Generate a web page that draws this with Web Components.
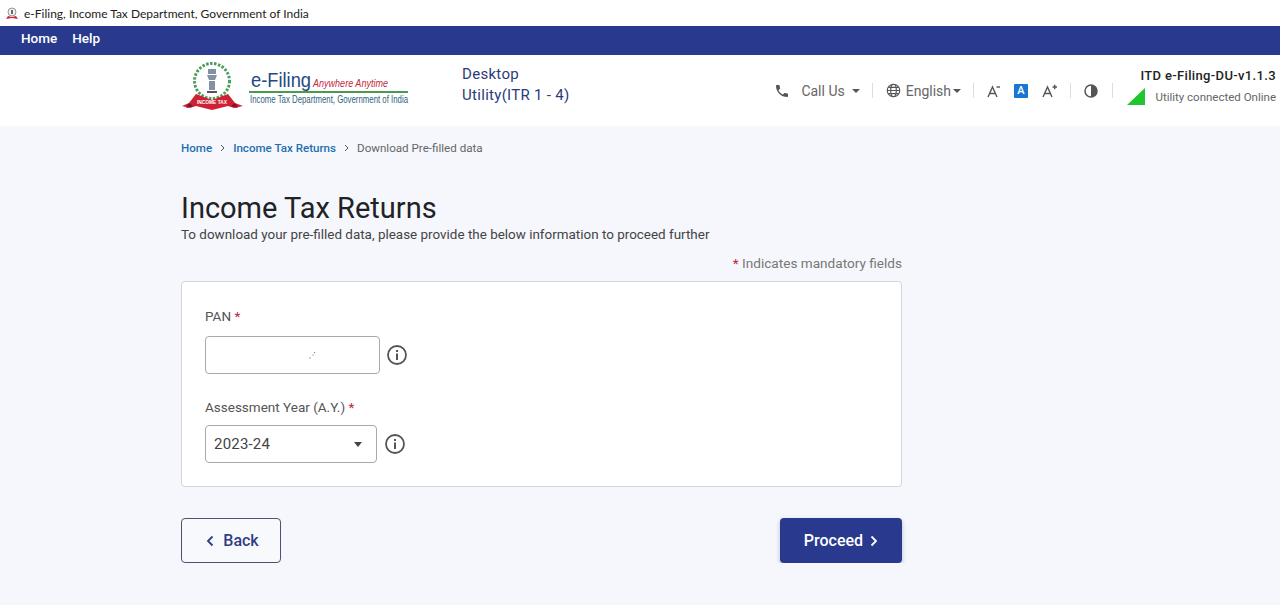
<!DOCTYPE html>
<html lang="en">
<head>
<meta charset="utf-8">
<title>e-Filing, Income Tax Department, Government of India</title>
<style>
html, body { margin: 0; padding: 0; background: #f5f7fc; font-family: Roboto, "Liberation Sans", sans-serif; }
</style>
</head>
<body>
<window-title>e-Filing, Income Tax Department, Government of India</window-title>
<top-nav></top-nav>
<site-header></site-header>
<page-main></page-main>

<script>
class windowTitle extends HTMLElement {
    constructor() {
        super();
        this.attachShadow({ mode: "open" });
        this.shadowRoot.innerHTML = `
        <style>
            :host { display: flex; align-items: center; height: 26px; background: #fff; padding-left: 5px; box-sizing: border-box; font: 12px Lato, "Open Sans", sans-serif; color: #222; }
            svg { margin-right: 5px; }
        </style>
        <svg width="14" height="13" viewBox="0 0 14 13">
            <circle cx="7" cy="5" r="4" fill="#f4f1ee" stroke="#8a9a8a"/>
            <rect x="6" y="3" width="2" height="4" fill="#667"/>
            <path d="M1 12 L3 9 L7 10 L11 9 L13 12 L7 11 Z" fill="#c8283c"/>
        </svg>
        <span><slot></slot></span>
        `;
    }
}
customElements.define("window-title", windowTitle);

class topNav extends HTMLElement {
    constructor() {
        super();
        this.attachShadow({ mode: "open" });
        this.shadowRoot.innerHTML = `
        <style>
            :host { display: flex; align-items: center; gap: 15px; height: 29px; padding: 0 0 5px 21px; box-sizing: border-box; background: #293a8e; color: #fff; font: 500 13.5px Roboto, sans-serif; }
        </style>
        <span>Home</span><span>Help</span>
        `;
    }
}
customElements.define("top-nav", topNav);

class efilingLogo extends HTMLElement {
    constructor() {
        super();
        this.attachShadow({ mode: "open" });
        this.shadowRoot.innerHTML = `
        <style>
            :host { display: block; width: 228px; height: 56px; }
            svg { display: block; }
        </style>
        <svg width="228" height="56" viewBox="0 0 228 56">
            <circle cx="31" cy="19" r="17.500" fill="none" stroke="#4a9f5c" stroke-width="3" stroke-dasharray="2.500 1.500"/>
            <path d="M27 7 h8 v5 h-8z M26 13 h10 l-2 5 h-6z M28 19 h6 v9 h-6z" fill="#8491a5"/>
            <rect x="26" y="29" width="10" height="2" fill="#555"/>
            <path d="M1 44 L8 41 L15 32 L31 38 L47 32 L54 41 L62 44 L53 46 L47 44 L31 48 L15 44 L9 46 Z" fill="#cf2133"/>
            <path d="M8 41 L5 46 L12 44 Z M54 41 L57 46 L50 44 Z" fill="#7a1525"/>
            <text x="16" y="42" font-family="Liberation Sans" font-size="4.500" font-weight="700" fill="#fff" textLength="30" lengthAdjust="spacingAndGlyphs">INCOME TAX</text>
            <text x="70" y="25" font-family="Liberation Sans" font-size="20" fill="#1f4a7d" textLength="60" lengthAdjust="spacingAndGlyphs">e-Filing</text>
            <text x="132" y="25" font-family="Liberation Sans" font-size="11" font-style="italic" fill="#c22a3e" textLength="75" lengthAdjust="spacingAndGlyphs">Anywhere Anytime</text>
            <rect x="68" y="29" width="159" height="2" fill="#4b9a52"/>
            <text x="69" y="41" font-family="Liberation Sans" font-size="10.500" fill="#2f5f80" textLength="158" lengthAdjust="spacingAndGlyphs">Income Tax Department, Government of India</text>
        </svg>
        `;
    }
}
customElements.define("efiling-logo", efilingLogo);

class siteHeader extends HTMLElement {
    constructor() {
        super();
        this.attachShadow({ mode: "open" });
        this.shadowRoot.innerHTML = `
        <style>
            :host { display: flex; align-items: center; height: 71px; padding-left: 181px; box-sizing: border-box; background: #fff; font-family: Roboto, sans-serif; white-space: nowrap; }
            efiling-logo { margin-top: -1px; }
            .app { margin-left: 53px; width: 120px; font-size: 15px; line-height: 21px; color: #2b3b78; letter-spacing: 0.3px; margin-top: -11px; white-space: normal; }
            .tools { display: flex; align-items: center; margin-left: 196px; height: 20px; color: #666; font-size: 14px; }
            .sep { width: 1px; height: 15px; background: #dedede; }
            .caret { width: 0; height: 0; border: 4px solid transparent; border-top: 4px solid #555; border-bottom: 0; display: inline-block; }
            .tools svg { display: block; flex: none; }
            .status { margin-left: 16px; width: 151px; align-self: stretch; display: flex; flex-direction: column; justify-content: center; align-items: flex-end; padding: 0 4px 6px 0; box-sizing: border-box; margin-top: -2px; }
            .status b { font-weight: 500; font-size: 13px; color: #222; letter-spacing: 0.35px; line-height: 16px; }
            .row { display: flex; align-items: center; gap: 10px; color: #666; font-size: 11.500px; line-height: 16px; margin-top: 4px; }
        </style>
        <efiling-logo></efiling-logo>
        <div class="app">Desktop Utility(ITR 1 - 4)</div>
        <div class="tools">
            <svg width="16" height="16" viewBox="0 0 24 24"><path fill="#555" d="M6.6 10.8c1.4 2.8 3.8 5.1 6.6 6.6l2.2-2.2c.3-.3.7-.4 1-.2 1.1.4 2.3.6 3.6.6.6 0 1 .4 1 1V20c0 .6-.4 1-1 1C10.6 21 3 13.4 3 4c0-.6.4-1 1-1h3.500c.6 0 1 .4 1 1 0 1.300.2 2.500.6 3.600.1.300 0 .7-.2 1z"/></svg>
            <span style="margin-left:11px">Call Us</span>
            <span class="caret" style="margin-left:7px"></span>
            <span class="sep" style="margin-left:12px"></span>
            <svg style="margin-left:13px" width="15" height="15" viewBox="0 0 24 24" fill="none" stroke="#555" stroke-width="1.800"><circle cx="12" cy="12" r="10"/><ellipse cx="12" cy="12" rx="4.500" ry="10"/><path d="M2 12h20M3.500 7h17M3.500 17h17"/></svg>
            <span style="margin-left:5px">English</span>
            <span class="caret" style="margin-left:2px"></span>
            <span class="sep" style="margin-left:12px"></span>
            <svg style="margin-left:13px" width="14" height="14" viewBox="0 0 14 14"><path fill="none" stroke="#555" stroke-width="1.400" d="M1 13 L5.500 3 L10 13 M2.800 9.500 H8.200"/><path stroke="#555" stroke-width="1.400" d="M9.500 3 H13"/></svg>
            <span style="margin-left:13px;width:14px;height:14px;background:#1976d2;color:#fff;font:500 11px/14px Roboto,sans-serif;text-align:center;border-radius:1px">A</span>
            <svg style="margin-left:14px" width="16" height="14" viewBox="0 0 16 14"><path fill="none" stroke="#555" stroke-width="1.400" d="M1 13 L5.500 3 L10 13 M2.800 9.500 H8.200"/><path stroke="#555" stroke-width="1.400" d="M10.500 3 H15 M12.700 .800 V5.200"/></svg>
            <span class="sep" style="margin-left:12px"></span>
            <svg style="margin-left:13px" width="14" height="14" viewBox="0 0 14 14"><circle cx="7" cy="7" r="6" fill="none" stroke="#555" stroke-width="1.500"/><path d="M7 1 A6 6 0 0 0 7 13 Z" fill="#555" transform="matrix(-1 0 0 1 14 0)"/></svg>
            <span class="sep" style="margin-left:14px"></span>
        </div>
        <div class="status">
            <b>ITD e-Filing-DU-v1.1.3</b>
            <div class="row">
                <svg width="18" height="17" viewBox="0 0 18 17"><path d="M0 17 L18 0 V17 Z" fill="#1fc62e"/></svg>
                <span>Utility connected Online</span>
            </div>
        </div>
        `;
    }
}
customElements.define("site-header", siteHeader);

class formField extends HTMLElement {
    constructor() {
        super();
        this.attachShadow({ mode: "open" });
        this.shadowRoot.innerHTML = `
        <style>
            :host { display: block; font-family: Roboto, sans-serif; }
            label { display: block; font-size: 13.500px; line-height: 18px; color: #555; margin-bottom: 11px; }
            :host([tight]) label { margin-bottom: 9px; }
            label i { font-style: normal; color: #c2213c; }
            .line { display: flex; align-items: center; }
            .box { height: 38px; box-sizing: border-box; background: #fff; border: 1px solid #a9a9a9; border-radius: 4px; display: flex; align-items: center; justify-content: space-between; padding: 0 14px 0 8px; font-size: 15px; color: #444; letter-spacing: 0.2px; }
            svg { margin-left: 6px; flex: none; }
            :host([tight]) svg { margin-left: 7px; }
        </style>
        <label></label>
        <div class="line">
            <div class="box"><slot></slot></div>
            <svg width="22" height="22" viewBox="0 0 22 22"><circle cx="11" cy="11" r="9" fill="none" stroke="#555" stroke-width="1.800"/><rect x="10" y="9.500" width="2" height="6.500" fill="#555"/><rect x="10" y="6" width="2" height="2" fill="#555"/></svg>
        </div>
        `;
    }
    connectedCallback() {
        this.shadowRoot.querySelector("label").innerHTML = this.getAttribute("label") + " <i>*</i>";
        this.shadowRoot.querySelector(".box").style.width = this.getAttribute("box-width") + "px";
    }
}
customElements.define("form-field", formField);

class actionButton extends HTMLElement {
    constructor() {
        super();
        this.attachShadow({ mode: "open" });
        this.shadowRoot.innerHTML = `
        <style>
            :host { display: inline-flex; align-items: center; justify-content: center; gap: 7px; height: 45px; box-sizing: border-box; border-radius: 4px; font: 500 16px Roboto, sans-serif; }
            :host([kind="back"]) { width: 100px; gap: 9px; padding-left: 3px; border: 1px solid #4b5272; color: #2f3d84; background: #f8f9fd; }
            :host([kind="next"]) { width: 122px; background: #293a8e; color: #fff; box-shadow: 0 2px 4px rgba(40,50,110,.3); }
        </style>
        <slot></slot>
        `;
    }
}
customElements.define("action-button", actionButton);

class pageMain extends HTMLElement {
    constructor() {
        super();
        this.attachShadow({ mode: "open" });
        this.shadowRoot.innerHTML = `
        <style>
            :host { display: block; width: 721px; margin-left: 181px; font-family: Roboto, sans-serif; }
            .crumbs { display: flex; align-items: center; height: 16px; margin-top: 14px; font-size: 11.600px; color: #666; }
            .crumbs a { color: #1f6fae; font-weight: 500; }
            .crumbs svg { margin: 0 8px; }
            h1 { margin: 34px 0 0; font-weight: 400; font-size: 29px; line-height: 36px; color: #212226; }
            .sub { font-size: 13.450px; line-height: 18px; color: #444; }
            .mand { text-align: right; font-size: 13.600px; line-height: 18px; color: #777; margin-top: 10px; }
            .mand i { font-style: normal; color: #c2213c; }
            .card { margin-top: 9px; height: 206px; box-sizing: border-box; background: #fff; border: 1px solid #d3d6dc; border-radius: 4px; padding: 25px 23px; display: flex; flex-direction: column; gap: 24px; }
            .dots { display: block; margin-left: 94px; }
            .arrow { width: 0; height: 0; border: 4.500px solid transparent; border-top: 5px solid #444; border-bottom: 0; }
            .btns { display: flex; justify-content: space-between; margin-top: 31px; }
        </style>
        <nav class="crumbs">
            <a>Home</a>
            <svg width="5" height="8" viewBox="0 0 5 8"><path d="M1 1l3 3-3 3" fill="none" stroke="#555"/></svg>
            <a>Income Tax Returns</a>
            <svg width="5" height="8" viewBox="0 0 5 8"><path d="M1 1l3 3-3 3" fill="none" stroke="#555"/></svg>
            <span>Download Pre-filled data</span>
        </nav>
        <h1>Income Tax Returns</h1>
        <div class="sub">To download your pre-filled data, please provide the below information to proceed further</div>
        <div class="mand"><i>*</i> Indicates mandatory fields</div>
        <div class="card">
            <form-field label="PAN" box-width="175"><svg class="dots" width="8" height="9" viewBox="0 0 8 9"><circle cx="6.500" cy="1.500" r=".7" fill="#888"/><circle cx="5" cy="4" r=".7" fill="#999"/><circle cx="2" cy="7" r=".7" fill="#888"/></svg><span></span></form-field>
            <form-field label="Assessment Year (A.Y.)" box-width="172" tight><span>2023-24</span><span class="arrow"></span></form-field>
        </div>
        <div class="btns">
            <action-button kind="back"><svg width="8" height="12" viewBox="0 0 8 12"><path d="M6.500 1.500L2 6l4.500 4.500" fill="none" stroke="currentColor" stroke-width="1.800"/></svg>Back</action-button>
            <action-button kind="next">Proceed<svg width="8" height="12" viewBox="0 0 8 12"><path d="M1.500 1.500L6 6l-4.500 4.500" fill="none" stroke="currentColor" stroke-width="1.800"/></svg></action-button>
        </div>
        `;
    }
}
customElements.define("page-main", pageMain);
</script>
</body>
</html>
